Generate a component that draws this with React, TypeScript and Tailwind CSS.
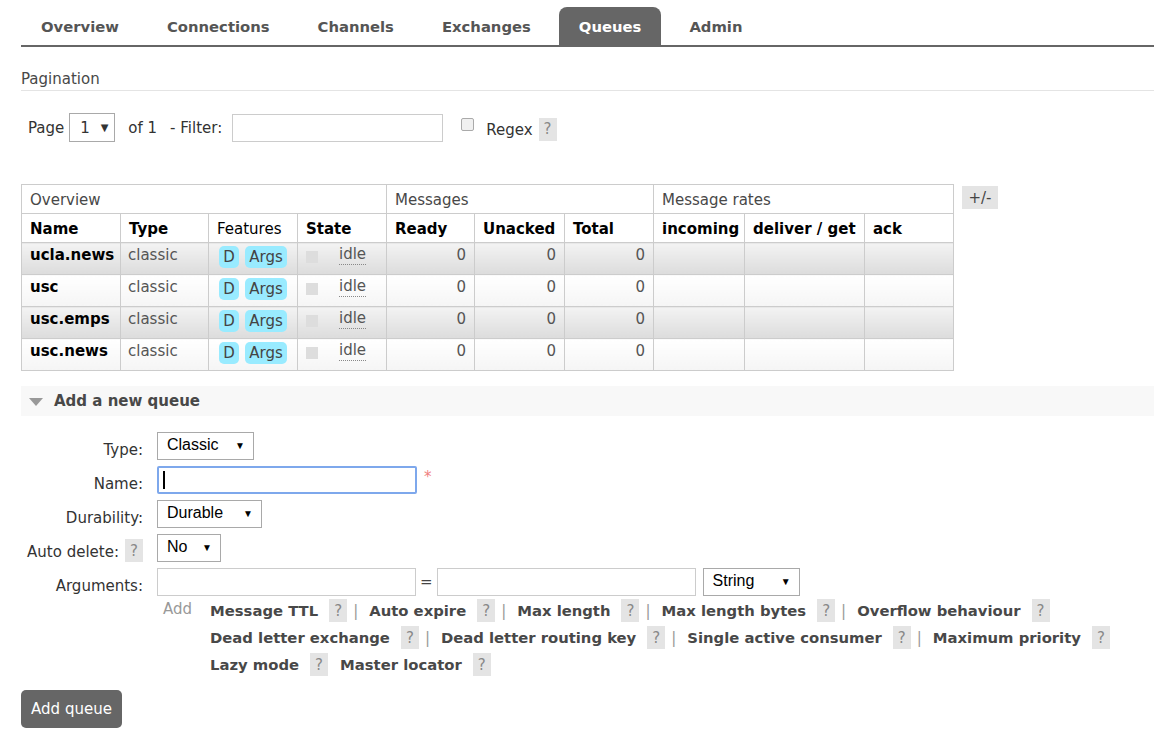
const tabs = ["Overview", "Connections", "Channels", "Exchanges", "Queues", "Admin"];

const queues = ["ucla.news", "usc", "usc.emps", "usc.news"];

const argRows: string[][] = [
  ["Message TTL", "Auto expire", "Max length", "Max length bytes", "Overflow behaviour"],
  ["Dead letter exchange", "Dead letter routing key", "Single active consumer", "Maximum priority"],
  ["Lazy mode", "Master locator"],
];

function Help({ className = "" }: { className?: string }) {
  return (
    <span
      className={`inline-flex h-[23px] w-[18px] items-center justify-center bg-[#e4e4e4] text-[15px] font-normal text-[#888] ${className}`}
    >
      ?
    </span>
  );
}

function FakeSelect({ value, width }: { value: string; width: string }) {
  return (
    <div
      className={`flex h-[28px] ${width} items-center justify-between border border-[#a9a9a9] bg-white pl-[9px] pr-[8px] font-[family-name:'Liberation_Sans',Arial,sans-serif] text-[16px] text-black`}
    >
      <span className="-mt-[2px]">{value}</span>
      <span className="text-[10px]">▼</span>
    </div>
  );
}

function FormLabel({ children }: { children: React.ReactNode }) {
  return <div className="flex h-[28px] items-end justify-end leading-[20px] text-[15px] text-[#333]">{children}</div>;
}

export default function App() {
  const cell = "border border-[#ccc] px-[8px] align-top";
  const head = `${cell} h-[29px] pt-[5px]`;
  return (
    <div className="min-h-screen bg-white pl-[21px] pt-[7px] font-[family-name:'DejaVu_Sans',Verdana,sans-serif] text-[15px] leading-[20px] text-[#484848]">
      {/* tabs */}
      <nav className="flex gap-2 border-b-2 border-[#666]">
        {tabs.map((t) => (
          <div
            key={t}
            className={`flex h-[38px] items-center rounded-t-[8px] px-5 pt-[1px] text-[14.8px] font-bold ${
              t === "Queues" ? "bg-[#666] text-white" : "text-[#555]"
            }`}
          >
            {t}
          </div>
        ))}
      </nav>

      {/* pagination */}
      <div className="mt-[22px] border-b border-[#e4e4e4] pb-[1px] text-[15px] text-[#484848]">Pagination</div>
      <div className="mt-[22px] flex items-center pl-[7px] text-[15px] text-[#333]">
        <span>Page</span>
        <div className="ml-[5px] flex h-[29px] w-[46px] items-center justify-between border border-[#a9a9a9] pl-[10px] pr-[6px] text-[15px]">
          <span>1</span>
          <span className="text-[10px]">▼</span>
        </div>
        <span className="ml-[13px]">of 1</span>
        <span className="ml-[13px]">- Filter:</span>
        <div className="ml-[10px] h-[28px] w-[211px] border border-[#ccc]" />
        <div className="ml-[18px] -mt-[6px] h-[13px] w-[13px] rounded-[2px] border border-[#aaa] bg-[#f0f0f0]" />
        <span className="ml-[12px] mt-[4px]">Regex</span>
        <Help className="ml-[6px] mt-[3px]" />
      </div>

      {/* table */}
      <div className="mt-[42px] flex items-start">
        <table className="w-[932px] table-fixed border-collapse text-[15px]">
          <colgroup>
            <col className="w-[99px]" />
            <col className="w-[88px]" />
            <col className="w-[89px]" />
            <col className="w-[89px]" />
            <col className="w-[88px]" />
            <col className="w-[90px]" />
            <col className="w-[89px]" />
            <col className="w-[91px]" />
            <col className="w-[120px]" />
            <col className="w-[89px]" />
          </colgroup>
          <thead>
            <tr className="text-left">
              <th colSpan={4} className={`${head} font-normal text-[#484848]`}>Overview</th>
              <th colSpan={3} className={`${head} font-normal text-[#484848]`}>Messages</th>
              <th colSpan={3} className={`${head} font-normal text-[#484848]`}>Message rates</th>
            </tr>
            <tr className="text-left text-black">
              <th className={head}>Name</th>
              <th className={head}>Type</th>
              <th className={`${head} font-normal`}>Features</th>
              <th className={head}>State</th>
              <th className={head}>Ready</th>
              <th className={head}>Unacked</th>
              <th className={head}>Total</th>
              <th className={head}>incoming</th>
              <th className={head}>deliver / get</th>
              <th className={head}>ack</th>
            </tr>
          </thead>
          <tbody>
            {queues.map((q, i) => {
              const bg =
                i % 2 === 0
                  ? "bg-linear-to-b from-[#f3f3f3] to-[#dcdcdc]"
                  : "bg-linear-to-b from-white to-[#f5f5f5]";
              const td = `${cell} ${bg} h-[32px] pt-[2px]`;
              return (
                <tr key={q}>
                  <td className={`${td} font-bold text-black`}>{q}</td>
                  <td className={`${td} pl-[7px] text-[#555]`}>classic</td>
                  <td className={`${td} px-[10px]`}>
                    <div className="mt-[1px] flex gap-[6px]">
                      <span className="flex h-[22px] w-[21px] items-center justify-center rounded-[5px] bg-[#99ebff] text-[#444]">
                        D
                      </span>
                      <span className="flex h-[22px] w-[44px] items-center justify-center rounded-[5px] bg-[#99ebff] text-[#444]">
                        Args
                      </span>
                    </div>
                  </td>
                  <td className={td}>
                    <div className="flex items-start">
                      <span className="mt-[6px] h-[12px] w-[12px] bg-[#ddd]" />
                      <span className="ml-[21px] border-b border-dotted border-[#888] leading-[19px] text-[#555]">idle</span>
                    </div>
                  </td>
                  <td className={`${td} text-right text-[#555]`}>0</td>
                  <td className={`${td} text-right text-[#555]`}>0</td>
                  <td className={`${td} text-right text-[#555]`}>0</td>
                  <td className={td} />
                  <td className={td} />
                  <td className={td} />
                </tr>
              );
            })}
          </tbody>
        </table>
        <div className="ml-[8px] mt-[2px] flex h-[23px] w-[36px] items-center justify-center bg-[#e4e4e4] text-[15px] text-[#444]">
          +/-
        </div>
      </div>

      {/* add a new queue */}
      <div className="mt-[15px] flex h-[30px] items-center bg-[#f8f8f8] pl-[8px]">
        <svg width="14" height="8" viewBox="0 0 14 8" className="mt-[2px]">
          <path d="M0 0 L14 0 L7 8 Z" fill="#999" />
        </svg>
        <span className="ml-[11px] text-[15px] font-bold text-[#484848]">Add a new queue</span>
      </div>

      <div className="mt-[16px] grid grid-cols-[122px_auto] gap-x-[14px] gap-y-[6px]">
        <FormLabel>Type:</FormLabel>
        <FakeSelect value="Classic" width="w-[97px]" />

        <FormLabel>Name:</FormLabel>
        <div className="flex items-start">
          <div className="flex h-[28px] w-[260px] items-center rounded-[2px] border-2 border-[#7ea8ec] pl-[4px]">
            <span className="h-[18px] w-[2px] bg-black" />
          </div>
          <span className="ml-[7px] mt-[1px] text-[15px] text-[#f08080]">*</span>
        </div>

        <FormLabel>Durability:</FormLabel>
        <FakeSelect value="Durable" width="w-[105px]" />

        <div className="flex h-[28px] items-end justify-end gap-[6px] text-[15px] text-[#333]">
          <span>Auto delete:</span>
          <Help />
        </div>
        <FakeSelect value="No" width="w-[64px]" />

        <FormLabel>Arguments:</FormLabel>
        <div className="flex items-center">
          <div className="h-[28px] w-[259px] border border-[#ccc]" />
          <span className="mx-[4px] text-[#444]">=</span>
          <div className="h-[28px] w-[259px] border border-[#ccc]" />
          <div className="ml-[7px]">
            <FakeSelect value="String" width="w-[97px]" />
          </div>
        </div>

        <div />
        <div className="-mt-[3px] flex">
          <span className="ml-[6px] text-[15px] text-[#999]">Add</span>
          <div className="ml-[18px] flex flex-col gap-[4px]">
            {argRows.map((row, ri) => (
              <div key={ri} className="flex items-center">
                {row.map((a, ai) => (
                  <span key={a} className="flex items-center">
                    {ai > 0 && ri !== 2 && <span className="ml-[6px] mr-[11px] text-[15px] text-[#999]">|</span>}
                    {ai > 0 && ri === 2 && <span className="ml-[12px]" />}
                    <span className="text-[14.8px] font-bold text-[#484848]">{a}</span>
                    <Help className="ml-[11px]" />
                  </span>
                ))}
              </div>
            ))}
          </div>
        </div>
      </div>

      <div className="mt-[14px] flex h-[38px] w-[101px] items-center justify-center rounded-[5px] bg-[#666] text-[15px] text-white">
        Add queue
      </div>
      <div className="h-[20px]" />
    </div>
  );
}
